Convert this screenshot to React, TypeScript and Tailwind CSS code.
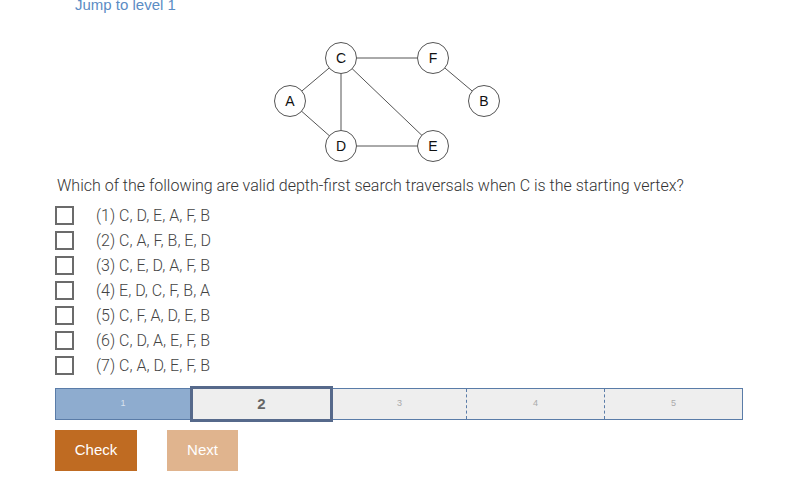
import React from 'react';

const nodes: { id: string; x: number; y: number }[] = [
  { id: 'C', x: 71, y: 18 },
  { id: 'F', x: 163, y: 18 },
  { id: 'A', x: 20, y: 61 },
  { id: 'B', x: 214, y: 61 },
  { id: 'D', x: 71, y: 106 },
  { id: 'E', x: 163, y: 106 },
];

const edges: [string, string][] = [
  ['C', 'F'], ['C', 'A'], ['C', 'D'], ['C', 'E'], ['A', 'D'], ['D', 'E'], ['F', 'B'],
];

const options = [
  '(1) C, D, E, A, F, B',
  '(2) C, A, F, B, E, D',
  '(3) C, E, D, A, F, B',
  '(4) E, D, C, F, B, A',
  '(5) C, F, A, D, E, B',
  '(6) C, D, A, E, F, B',
  '(7) C, A, D, E, F, B',
];

function Graph() {
  const pos = (id: string) => nodes.find(n => n.id === id)!;
  return (
    <svg width="235" height="125" viewBox="0 0 235 125" className="block">
      {edges.map(([a, b]) => {
        const p = pos(a), q = pos(b);
        return <line key={a + b} x1={p.x} y1={p.y} x2={q.x} y2={q.y} stroke="#555" strokeWidth="1" />;
      })}
      {nodes.map(n => (
        <g key={n.id}>
          <circle cx={n.x} cy={n.y} r="15.5" fill="#fff" stroke="#555" strokeWidth="1" />
          <text x={n.x} y={n.y + 5} textAnchor="middle" fontSize="14" fontFamily="'Liberation Sans', Arial, sans-serif" fill="#111">{n.id}</text>
        </g>
      ))}
    </svg>
  );
}

export default function App() {
  return (
    <div className="w-[807px] h-[486px] overflow-hidden bg-white font-['Roboto',sans-serif]">
      <div className="pl-[75px] -mt-[3px] h-[14px] text-[15px] leading-[16px] text-[#5b8cc4] font-['Liberation_Sans',Arial,sans-serif]">
        Jump to level 1
      </div>

      <div className="pl-[270px] pt-[29px]">
        <Graph />
      </div>

      <p className="pl-[57px] mt-[11px] text-[16px] leading-[20px] text-[#333] font-light">
        Which of the following are valid depth-first search traversals when C is the starting vertex?
      </p>

      <div className="pl-[55px] mt-[7px] flex flex-col">
        {options.map(o => (
          <label key={o} className="flex items-center h-[25px]">
            <span className="w-[19px] h-[19px] border-2 border-[#6b6b6b] bg-white shrink-0" />
            <span className="ml-[22px] text-[16px] text-[#444] font-light">{o}</span>
          </label>
        ))}
      </div>

      <div className="ml-[55px] mt-[10px] w-[688px] h-[32px] flex border border-[#5a7ca8] bg-[#eeeeee] font-['Liberation_Sans',Arial,sans-serif]">
        <div className="w-[134px] bg-[#8eaccf] flex items-center justify-center text-[9px] text-[#d8e2ee]">1</div>
        <div className="w-[143px] -my-[3px] border-[3px] border-[#56698b] bg-[#eeeeee] flex items-center justify-center text-[15px] font-bold text-[#666]">2</div>
        <div className="w-[134px] flex items-center justify-center text-[9px] text-[#aaa] border-r border-dashed border-[#5a7ca8]">3</div>
        <div className="w-[138px] flex items-center justify-center text-[9px] text-[#aaa] border-r border-dashed border-[#5a7ca8]">4</div>
        <div className="flex-1 flex items-center justify-center text-[9px] text-[#aaa]">5</div>
      </div>

      <div className="pl-[55px] mt-[10px] flex gap-[30px] font-['Liberation_Sans',Arial,sans-serif]">
        <button className="w-[82px] h-[41px] bg-[#bf6b22] text-white text-[15px]">Check</button>
        <button className="w-[71px] h-[41px] bg-[#e0b48e] text-white text-[15px]">Next</button>
      </div>
    </div>
  );
}
